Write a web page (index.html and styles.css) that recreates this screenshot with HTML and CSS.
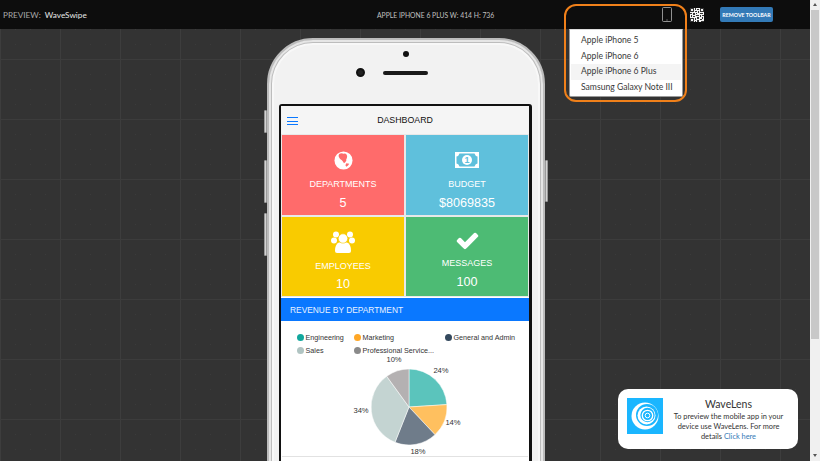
FILE: index.html
```html
<!DOCTYPE html>
<html lang="en">
<head>
    <meta charset="UTF-8">
    <title>Preview: WaveSwipe</title>
    <link rel="stylesheet" href="styles.css">
</head>
<body>
    <div class="page">
        <header class="toolbar">
            <div class="app-name"><span class="app-label">PREVIEW:</span> WaveSwipe</div>
            <div class="device-info">APPLE IPHONE 6 PLUS W: 414 H: 736</div>
            <svg class="device-icon" viewBox="0 0 10 15">
                <rect x="0.5" y="0.5" width="9" height="14" rx="1" fill="none" stroke="#b4b4b4" stroke-width="0.8"/>
                <rect x="4.5" y="12.500" width="1" height="1" fill="#b4b4b4"/>
            </svg>
            <svg class="qr-icon" viewBox="0 0 14 14" shape-rendering="crispEdges">
                <rect width="14" height="14" fill="#f2f2f2"/>
                <path fill="#333" fill-rule="evenodd" d="M0 0h4v4h-4zM10 0h4v4h-4zM0 10h4v4h-4zM1 1v2h2v-2zM11 1v2h2v-2zM1 11v2h2v-2zM5 0h1v2h-1zM7 1h2v1h-2zM5 3h2v1h-2zM8 3h1v2h-1zM0 5h2v1h-2zM3 5h2v2h-2zM6 5h1v1h-1zM10 5h3v1h-3zM1 7h1v2h-1zM6 7h3v1h-3zM10 7h1v2h-1zM12 7h2v1h-2zM3 8h2v1h-2zM7 9h2v2h-2zM12 9h1v2h-1zM5 10h1v2h-1zM10 11h2v1h-2zM7 12h2v2h-2zM5 13h1v1h-1zM11 13h3v1h-3z"/>
            </svg>
            <button class="remove-btn">REMOVE TOOLBAR</button>
        </header>

        <main class="canvas">
            <div class="phone">
                <span class="side-btn left-1"></span>
                <span class="side-btn left-2"></span>
                <span class="side-btn left-3"></span>
                <span class="side-btn right-1"></span>
                <div class="phone-head">
                    <span class="sensor"></span>
                    <div class="earpiece-row">
                        <span class="camera"></span>
                        <span class="earpiece"></span>
                    </div>
                </div>
                <div class="screen">
                    <div class="app-header">
                        <span class="hamburger"><i></i><i></i><i></i></span>
                        <span class="app-title">DASHBOARD</span>
                    </div>
                    <div class="tiles">
                        <div class="tile tile-red">
                            <svg class="tile-icon" viewBox="0 0 20 20">
                                <circle cx="10" cy="10" r="9.500" fill="#fff"/>
                                <path fill="#ff6b6b" d="M5 3.500q3-2 5-.5 2-1 3 .5 1.500 1.500.5 4-1 1-.5 2.500-1 2-2.500 3-1-2-2.500-3.500-2-1-3-3.500-.5-1.500.5-2.500zM13 13l3 .5q-1 2-3 3l-1-1.500z"/>
                            </svg>
                            <div class="tile-label">DEPARTMENTS</div>
                            <div class="tile-value">5</div>
                        </div>
                        <div class="tile tile-blue">
                            <svg class="tile-icon money" viewBox="0 0 24 16">
                                <rect width="24" height="16" fill="#fff"/>
                                <path fill="#5fc0dc" d="M1.500 4.500q2 0 3-3h15q1 3 3 3v7q-2 0-3 3h-15q-1-3-3-3z"/>
                                <circle cx="12" cy="8" r="5" fill="#fff"/>
                                <text x="12" y="11" class="money-digit">1</text>
                            </svg>
                            <div class="tile-label">BUDGET</div>
                            <div class="tile-value">$8069835</div>
                        </div>
                        <div class="tile tile-yellow">
                            <svg class="tile-icon users" viewBox="0 0 24 22">
                                <circle cx="5" cy="3.500" r="3" fill="#fff"/>
                                <circle cx="19" cy="3.500" r="3" fill="#fff"/>
                                <circle cx="3" cy="9.500" r="3" fill="#fff"/>
                                <circle cx="21" cy="9.500" r="3" fill="#fff"/>
                                <path fill="#fff" d="M4 20q0-7 4-8.500h8q4 1.500 4 8.500 0 2-2 2h-12q-2 0-2-2z"/>
                                <circle cx="12" cy="7.500" r="4.700" fill="#fff" stroke="#f9cb00" stroke-width="0.6"/>
                            </svg>
                            <div class="tile-label">EMPLOYEES</div>
                            <div class="tile-value">10</div>
                        </div>
                        <div class="tile tile-green">
                            <svg class="tile-icon check" viewBox="0 0 1792 1792">
                                <path fill="#fff" d="M1671 566q0 40-28 68l-724 724-136 136q-28 28-68 28t-68-28l-136-136-362-362q-28-28-28-68t28-68l136-136q28-28 68-28t68 28l294 295 656-657q28-28 68-28t68 28l136 136q28 28 28 68z"/>
                            </svg>
                            <div class="tile-label">MESSAGES</div>
                            <div class="tile-value">100</div>
                        </div>
                    </div>
                    <div class="section-bar">REVENUE BY DEPARTMENT</div>
                    <div class="chart-card">
                        <div class="legend">
                            <span class="legend-item"><i class="dot dot-eng"></i>Engineering</span>
                            <span class="legend-item"><i class="dot dot-mkt"></i>Marketing</span>
                            <span class="legend-item"><i class="dot dot-gen"></i>General and Admin</span>
                            <span class="legend-item"><i class="dot dot-sal"></i>Sales</span>
                            <span class="legend-item"><i class="dot dot-pro"></i>Professional Service...</span>
                        </div>
                        <svg class="pie" viewBox="-128 -52 248 100">
                            <path fill="#5bc4bc" stroke="#fff" stroke-width="0.5" d="M0 0V-38A38 38 0 0 1 37.900 -2.400Z"/>
                            <path fill="#ffc05f" stroke="#fff" stroke-width="0.5" d="M0 0L37.900 -2.400A38 38 0 0 1 26 27.700Z"/>
                            <path fill="#6f7c8a" stroke="#fff" stroke-width="0.5" d="M0 0L26 27.700A38 38 0 0 1 -14 35.300Z"/>
                            <path fill="#c4d4d2" stroke="#fff" stroke-width="0.5" d="M0 0L-14 35.300A38 38 0 0 1 -22.300 -30.700Z"/>
                            <path fill="#b4b1b2" stroke="#fff" stroke-width="0.5" d="M0 0L-22.300 -30.700A38 38 0 0 1 0 -38Z"/>
                            <text x="-15" y="-45" class="pie-label" text-anchor="middle">10%</text>
                            <text x="32" y="-34.500" class="pie-label" text-anchor="middle">24%</text>
                            <text x="44" y="18" class="pie-label" text-anchor="middle">14%</text>
                            <text x="-48" y="6" class="pie-label" text-anchor="middle">34%</text>
                            <text x="9" y="47" class="pie-label" text-anchor="middle">18%</text>
                        </svg>
                        <div class="chart-rule"></div>
                    </div>
                </div>
            </div>

            <div class="wavelens">
                <svg class="wavelens-logo" viewBox="0 0 36 36">
                    <rect width="36" height="36" fill="#1ab6ff"/>
                    <circle cx="18" cy="18" r="13.500" fill="#fff"/>
                    <circle cx="20" cy="17" r="11" fill="#1ab6ff"/>
                    <circle cx="19.500" cy="17.500" r="9" fill="#fff"/>
                    <circle cx="20.500" cy="17" r="7.200" fill="#1ab6ff"/>
                    <circle cx="20.500" cy="17.500" r="5.200" fill="none" stroke="#fff" stroke-width="1.300"/>
                    <circle cx="20.500" cy="17.500" r="2.300" fill="none" stroke="#fff" stroke-width="1"/>
                </svg>
                <div class="wavelens-text">
                    <div class="wavelens-title">WaveLens</div>
                    <p>To preview the mobile app in your device use WaveLens. For more details <a href="#">Click here</a></p>
                </div>
            </div>
        </main>

        <div class="highlight"></div>
        <ul class="device-menu">
            <li>Apple iPhone 5</li>
            <li>Apple iPhone 6</li>
            <li class="active">Apple iPhone 6 Plus</li>
            <li>Samsung Galaxy Note III</li>
        </ul>
    </div>
    <div class="scrollbar">
        <span class="scroll-arrow up"></span>
        <span class="scroll-thumb"></span>
        <span class="scroll-arrow down"></span>
    </div>
</body>
</html>
```

FILE: styles.css
```css
* {
    box-sizing: border-box;
}
html, body {
    margin: 0;
    height: 461px;
    overflow: hidden;
}
body {
    display: flex;
    font-family: "Liberation Sans", Arial, sans-serif;
    background: #333;
}
.page {
    position: relative;
    width: 810px;
    height: 461px;
    display: flex;
    flex-direction: column;
}

/* toolbar */
.toolbar {
    height: 29px;
    flex: none;
    display: flex;
    align-items: center;
    background: #0d0d0d;
    color: #bbb;
    font-family: Lato, sans-serif;
}
.app-name {
    width: 377px;
    padding-left: 3px;
    font-size: 8.200px;
    color: #e6e6e6;
}
.app-label {
    color: #a8a8a8;
    margin-right: 2px;
}
.device-info {
    width: 285px;
    font-size: 6.800px;
    color: #c0c0c0;
    white-space: nowrap;
}
.device-icon {
    width: 10px;
    height: 15px;
    flex: none;
}
.qr-icon {
    width: 14px;
    height: 14px;
    flex: none;
    margin-left: 18px;
}
.remove-btn {
    width: 53px;
    height: 15px;
    flex: none;
    margin-left: 16px;
    padding: 0;
    border: none;
    border-radius: 2px;
    background: #337ab7;
    color: #fff;
    font-family: Lato, sans-serif;
    font-size: 5.300px;
    font-weight: bold;
    white-space: nowrap;
}

/* canvas */
.canvas {
    position: relative;
    flex: 1;
    display: flex;
    justify-content: center;
    align-items: flex-start;
    padding-top: 9px;
    overflow: hidden;
    background-color: #333;
    background-image:
        linear-gradient(#3c3c3c 1px, transparent 1px),
        linear-gradient(90deg, #3d3d3d 1px, transparent 1px),
        radial-gradient(circle at 0.5px 0.5px, #3b3b3b 0.6px, transparent 0.7px);
    background-size: 60px 60px, 60px 60px, 15px 15px;
    background-position: 0 30px, 0 0, 0 0;
}

/* phone */
.phone {
    position: relative;
    width: 278px;
    height: 640px;
    flex: none;
    margin-left: 2px;
    padding: 0 10px;
    background: #f2f2f2;
    border: 2px solid #bcbcbc;
    border-radius: 46px;
    box-shadow: inset 0 0 0 2px #e6e6e6, inset 0 0 0 3px #bdbdbd, inset 0 0 0 5px #f8f8f8;
}
.phone-head {
    height: 64px;
    display: flex;
    flex-direction: column;
    align-items: center;
    padding-top: 11px;
}
.sensor {
    width: 6px;
    height: 6px;
    border-radius: 50%;
    background: #111;
}
.earpiece-row {
    display: flex;
    align-items: center;
    gap: 18px;
    margin-top: 11px;
    margin-left: -28px;
}
.camera {
    width: 9px;
    height: 9px;
    border-radius: 50%;
    background: #222;
    border: 2px solid #111;
}
.earpiece {
    width: 45px;
    height: 4px;
    border-radius: 2px;
    background: #1a1a1a;
}
.side-btn {
    position: absolute;
    width: 3px;
    background: #d4d4d4;
    border: 1px solid #9a9a9a;
    border-radius: 1px;
}
.left-1 { left: -5px; top: 70px; height: 23px; }
.left-2 { left: -5px; top: 120px; height: 43px; }
.left-3 { left: -5px; top: 173px; height: 43px; }
.right-1 { right: -5px; top: 120px; height: 42px; }

.screen {
    width: 253px;
    height: 560px;
    background: #fff;
    border: 2px solid #111;
    border-right-width: 3px;
    border-radius: 3px;
}
.app-header {
    height: 28px;
    display: flex;
    align-items: center;
    justify-content: center;
    position: relative;
    background: #f5f5f5;
    color: #111;
}
.hamburger {
    position: absolute;
    left: 6px;
    top: 11px;
    width: 11px;
    display: flex;
    flex-direction: column;
    gap: 2.500px;
}
.hamburger i {
    display: block;
    height: 1px;
    background: #0a78ff;
}
.app-title {
    font-size: 8.800px;
}
.tiles {
    display: grid;
    grid-template-columns: 122px 122px;
    grid-template-rows: 80px 79px;
    gap: 2px;
    padding: 1px 1px;
    background: #e8e8e8;
}
.tile {
    display: flex;
    flex-direction: column;
    align-items: center;
    color: #fff;
    padding-top: 16px;
}
.tile-red { background: #ff6b6b; }
.tile-blue { background: #5fc0dc; }
.tile-yellow { background: #f9cb00; padding-top: 13.700px; }
.tile-green { background: #4dbb74; padding-top: 10.500px; }
.tile-icon {
    width: 19px;
    height: 19px;
    flex: none;
}
.money {
    width: 24px;
    height: 16px;
    margin: 1px 0 2px;
}
.money-digit {
    font-size: 9px;
    font-weight: bold;
    fill: #5fc0dc;
    text-anchor: middle;
}
.users {
    width: 24px;
    height: 22px;
}
.check {
    width: 25px;
    height: 25px;
}
.tile-label {
    font-size: 9px;
    margin-top: 8px;
    line-height: 12px;
}
.tile-yellow .tile-label {
    margin-top: 7px;
}
.tile-green .tile-label {
    margin-top: 4.500px;
}
.tile-value {
    font-size: 12.600px;
    line-height: 14px;
    margin-top: 5.600px;
}

.section-bar {
    height: 23px;
    display: flex;
    align-items: center;
    padding-left: 9px;
    margin-top: 1px;
    background: #0a78ff;
    color: #e8f2ff;
    font-size: 8.400px;
}
.chart-card {
    background: #fff;
    padding-top: 11px;
}
.legend {
    display: grid;
    grid-template-columns: 57px 91px auto;
    row-gap: 3px;
    padding-left: 16px;
    height: 23px;
}
.legend-item {
    display: flex;
    align-items: center;
    gap: 1.500px;
    font-size: 7.200px;
    line-height: 9px;
    color: #333;
    white-space: nowrap;
}
.dot {
    width: 7px;
    height: 7px;
    border-radius: 50%;
    flex: none;
}
.dot-eng { background: #12a79d; }
.dot-mkt { background: #ffa726; }
.dot-gen { background: #34495e; }
.dot-sal { background: #b0c4c2; }
.dot-pro { background: #8a8a8a; }
.pie {
    display: block;
    width: 248px;
    height: 100px;
    margin-top: -0.500px;
}
.pie-label {
    font-size: 7.600px;
    fill: #333;
}
.chart-rule {
    height: 1px;
    margin: 1px 1px 0;
    background: #e2e2e2;
}

/* device menu and callout */
.highlight {
    position: absolute;
    left: 564px;
    top: 4px;
    width: 123px;
    height: 98px;
    border: 2px solid #f0801a;
    border-radius: 12px;
    z-index: 3;
}
.device-menu {
    position: absolute;
    left: 569px;
    top: 29px;
    width: 114px;
    height: 68px;
    margin: 0;
    padding: 3px 1px;
    list-style: none;
    background: #fff;
    border: 1px solid #999;
    border-top-color: #ddd;
    border-radius: 0 0 2px 2px;
    z-index: 2;
}
.device-menu li {
    height: 15.600px;
    line-height: 15.600px;
    padding-left: 10px;
    font-family: Lato, sans-serif;
    font-size: 8.600px;
    color: #3a3a3a;
    white-space: nowrap;
}
.device-menu .active {
    background: #f4f4f4;
}

.wavelens {
    position: absolute;
    left: 618px;
    top: 360px;
    width: 180px;
    height: 60px;
    display: flex;
    align-items: flex-start;
    gap: 6px;
    padding: 9px 10px 0 9px;
    background: #fff;
    border-radius: 10px;
}
.wavelens-logo {
    width: 36px;
    height: 36px;
    flex: none;
}
.wavelens-text {
    flex: 1;
    text-align: center;
    font-family: Lato, sans-serif;
    color: #333;
}
.wavelens-title {
    font-size: 10.500px;
    line-height: 13px;
}
.wavelens-text p {
    margin: 1px 0 0;
    font-size: 7.400px;
    line-height: 10px;
}
.wavelens-text a {
    color: #337ab7;
    text-decoration: none;
}

/* scrollbar */
.scrollbar {
    width: 10px;
    height: 461px;
    flex: none;
    display: flex;
    flex-direction: column;
    background: #f0f0f0;
}
.scroll-arrow {
    height: 10px;
    flex: none;
    position: relative;
}
.scroll-arrow::after {
    content: "";
    position: absolute;
    left: 3px;
    top: 3px;
    border-left: 2px solid transparent;
    border-right: 2px solid transparent;
}
.scroll-arrow.up::after {
    border-bottom: 3px solid #555;
}
.scroll-arrow.down::after {
    border-top: 3px solid #555;
}
.scroll-thumb {
    height: 329px;
    margin: 0 1px;
    background: #c8c8c8;
}
.scroll-arrow.down {
    margin-top: auto;
}
```
